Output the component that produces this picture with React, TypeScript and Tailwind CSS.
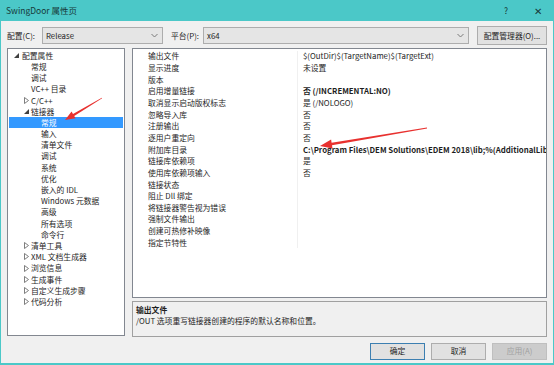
import React from "react";

const FONT = { fontFamily: '"Noto Sans CJK SC", "Noto Sans", sans-serif' };

type TreeItem = { t: string; lvl: 0 | 1 | 2; tri?: "open" | "closed"; sel?: boolean };

const tree: TreeItem[] = [
  { t: "配置属性", lvl: 0, tri: "open" },
  { t: "常规", lvl: 1 },
  { t: "调试", lvl: 1 },
  { t: "VC++ 目录", lvl: 1 },
  { t: "C/C++", lvl: 1, tri: "closed" },
  { t: "链接器", lvl: 1, tri: "open" },
  { t: "常规", lvl: 2, sel: true },
  { t: "输入", lvl: 2 },
  { t: "清单文件", lvl: 2 },
  { t: "调试", lvl: 2 },
  { t: "系统", lvl: 2 },
  { t: "优化", lvl: 2 },
  { t: "嵌入的 IDL", lvl: 2 },
  { t: "Windows 元数据", lvl: 2 },
  { t: "高级", lvl: 2 },
  { t: "所有选项", lvl: 2 },
  { t: "命令行", lvl: 2 },
  { t: "清单工具", lvl: 1, tri: "closed" },
  { t: "XML 文档生成器", lvl: 1, tri: "closed" },
  { t: "浏览信息", lvl: 1, tri: "closed" },
  { t: "生成事件", lvl: 1, tri: "closed" },
  { t: "自定义生成步骤", lvl: 1, tri: "closed" },
  { t: "代码分析", lvl: 1, tri: "closed" },
];

const rows: [string, string, boolean?][] = [
  ["输出文件", "$(OutDir)$(TargetName)$(TargetExt)"],
  ["显示进度", "未设置"],
  ["版本", ""],
  ["启用增量链接", "否 (/INCREMENTAL:NO)", true],
  ["取消显示启动版权标志", "是 (/NOLOGO)"],
  ["忽略导入库", "否"],
  ["注册输出", "否"],
  ["逐用户重定向", "否"],
  ["附加库目录", "C:\\Program Files\\DEM Solutions\\EDEM 2018\\lib;%(AdditionalLibraryDirectories)", true],
  ["链接库依赖项", "是"],
  ["使用库依赖项输入", "否"],
  ["链接状态", ""],
  ["阻止 Dll 绑定", ""],
  ["将链接器警告视为错误", ""],
  ["强制文件输出", ""],
  ["创建可热修补映像", ""],
  ["指定节特性", ""],
];

function Tri({ kind }: { kind: "open" | "closed" }) {
  if (kind === "open")
    return (
      <svg width="5" height="5" viewBox="0 0 5 5">
        <polygon points="5,0 5,5 0,5" fill="#404040" />
      </svg>
    );
  return (
    <svg width="5" height="7" viewBox="0 0 5 7">
      <polygon points="0.5,0.5 4.5,3.5 0.5,6.5" fill="none" stroke="#707070" strokeWidth="0.9" />
    </svg>
  );
}

function Chevron() {
  return (
    <svg width="7" height="5" viewBox="0 0 7 5">
      <polyline points="0.5,1 3.5,4 6.5,1" fill="none" stroke="#7a7a7a" strokeWidth="1" />
    </svg>
  );
}

export default function App() {
  return (
    <div
      className="w-[554px] h-[365px] bg-[#4bc8c8] flex flex-col px-[1px] pb-[2px] relative overflow-hidden"
      style={FONT}
    >
      {/* title bar */}
      <div className="h-[21px] flex items-center text-[8.5px] text-[#173a3a] shrink-0">
        <span className="ml-[5px]">SwingDoor 属性页</span>
        <span className="ml-auto text-[8.5px] mr-[26px]">?</span>
        <span className="text-[10px] mr-[11px]">✕</span>
      </div>
      {/* body */}
      <div className="flex-1 bg-[#f0f0f0] flex flex-col px-[6px] text-[7.8px] text-[#1e1e1e] min-h-0">
        {/* toolbar */}
        <div className="h-[27px] flex items-center pt-[2px] shrink-0">
          <span className="w-[35px] shrink-0">配置(C):</span>
          <div className="w-[121px] shrink-0 h-[17px] border border-[#adadad] bg-[#e5e5e5] flex items-center pl-[3px] pr-[4px]">
            <span>Release</span>
            <span className="ml-auto flex"><Chevron /></span>
          </div>
          <span className="ml-[8px] w-[32px] shrink-0">平台(P):</span>
          <div className="w-[266px] shrink-0 h-[17px] border border-[#adadad] bg-[#e5e5e5] flex items-center pl-[3px] pr-[4px]">
            <span>x64</span>
            <span className="ml-auto flex"><Chevron /></span>
          </div>
          <div className="ml-[8px] w-[70px] shrink-0 h-[19px] border border-[#adadad] bg-[#e1e1e1] flex items-center justify-center whitespace-nowrap">
            配置管理器(O)...
          </div>
        </div>
        {/* main */}
        <div className="flex h-[289px] gap-[7px] shrink-0">
          {/* tree */}
          <div className="w-[118px] shrink-0 h-[288px] border border-[#828790] bg-white pt-[1px] pl-[1px] pr-[1px] overflow-hidden">
            {tree.map((it, i) => {
              const triLeft = it.lvl === 0 ? 5 : 15;
              const textLeft = it.lvl === 0 ? 13 : it.lvl === 1 ? 22 : 32;
              return (
                <div
                  key={i}
                  className={
                    "h-[11.2px] relative flex items-center whitespace-nowrap " +
                    (it.sel ? "bg-[#3399ff] text-white" : "")
                  }
                >
                  {it.tri && (
                    <span className="absolute flex" style={{ left: triLeft, top: it.tri === "open" ? 3 : 2 }}>
                      <Tri kind={it.tri} />
                    </span>
                  )}
                  <span style={{ marginLeft: textLeft }}>{it.t}</span>
                </div>
              );
            })}
          </div>
          {/* right */}
          <div className="flex-1 min-w-0 flex flex-col gap-[3px]">
            <div className="h-[251px] border border-[#828790] bg-white pt-[1.5px] overflow-hidden">
              {rows.map(([l, v, b], i) => (
                <div key={i} className="h-[11.65px] flex items-center whitespace-nowrap overflow-hidden">
                  <span className="w-[164px] pl-[15px] shrink-0">{l}</span>
                  <span className="w-[1px] self-stretch bg-[#f0f0f0] shrink-0" />
                  <span className={"pl-[5px] " + (b ? "font-bold" : "")}>{v}</span>
                </div>
              ))}
            </div>
            <div className="h-[36px] border border-[#a0a0a0] bg-[#f0f0f0] pl-[3px] pt-[2px] leading-[11px]">
              <div className="font-bold">输出文件</div>
              <div>/OUT 选项重写链接器创建的程序的默认名称和位置。</div>
            </div>
          </div>
        </div>
        {/* buttons */}
        <div className="flex-1 flex items-center justify-end gap-[6px] pt-[2px]">
          <div className="w-[55px] h-[17px] border border-[#3c7fb1] bg-[#e1e1e1] flex items-center justify-center">确定</div>
          <div className="w-[55px] h-[17px] border border-[#adadad] bg-[#e1e1e1] flex items-center justify-center">取消</div>
          <div className="w-[55px] h-[17px] border border-[#bfbfbf] bg-[#cccccc] text-[#a0a0a0] flex items-center justify-center">应用(A)</div>
        </div>
      </div>
      {/* red arrows overlay */}
      <svg className="absolute left-0 top-0 pointer-events-none" width="554" height="365">
        <polygon
          points="102.15,98.26 74.2,115.9 75.6,118.3 65,120 71.6,111.5 73.0,113.9 101.85,97.74"
          fill="#e8312f"
        />
        <polygon
          points="427.07,128.39 332.0,145.3 332.5,148.4 320,146 331.1,139.6 331.6,142.7 426.93,127.61"
          fill="#e8312f"
        />
      </svg>
    </div>
  );
}
